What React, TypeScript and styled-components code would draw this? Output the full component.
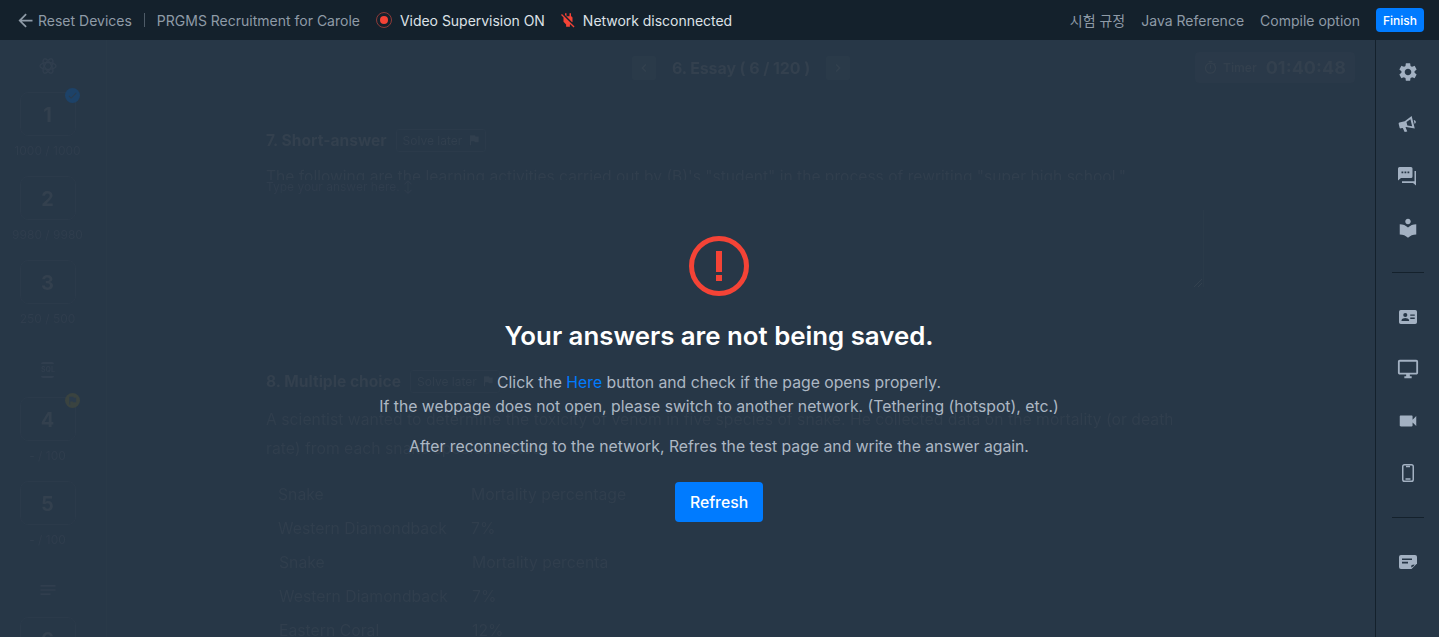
import React from "react";
import styled, { createGlobalStyle } from "styled-components";
import {
  MdArrowBack, MdSettings, MdLocalLibrary, MdOutlineDesktopWindows, MdVideocam, MdPowerOff,
  MdFlag, MdChevronLeft, MdChevronRight, MdOutlineTimer, MdCheck, MdNotes,
} from "react-icons/md";

const Global = createGlobalStyle`
  html, body { margin: 0; padding: 0; height: 100%; background: #273747; }
  * { box-sizing: border-box; }
  body { font-family: Inter, "Noto Sans CJK KR", "Liberation Sans", sans-serif; overflow: hidden; }
`;

const Page = styled.div`
  position: relative; width: 1439px; height: 637px; display: flex; flex-direction: column;
  overflow: hidden; background: #273747;
`;
const TopBar = styled.header`
  height: 40px; flex: none; display: flex; align-items: center; justify-content: space-between;
  background: #14212c; padding: 0 15px 0 15px; font-size: 14px; color: #8f9ba7;
`;
const BarGroup = styled.div`display: flex; align-items: center; gap: ${(p: { $gap: number }) => p.$gap}px;`;
const Back = styled.span`display: flex; align-items: center; gap: 2px; svg { font-size: 21px; }`;
const BarDivider = styled.span`width: 1px; height: 14px; background: #4e5b67; margin: 0 -1px;`;
const Status = styled.span<{ $gap: number; $ml: number }>`
  display: flex; align-items: center; gap: ${(p) => p.$gap}px; color: #dde2e7;
  margin-left: ${(p) => p.$ml}px; letter-spacing: -.03px;
`;
const Rec = styled.span`
  width: 16px; height: 16px; border-radius: 50%; border: 1px solid #8c3a38; display: flex;
  align-items: center; justify-content: center;
  &::after { content: ""; width: 8px; height: 8px; border-radius: 50%; background: #f44336; }
`;
const PlugIcon = styled(MdPowerOff)`color: #f44336; font-size: 18px; margin-left: -2px;`;
const FinishButton = styled.button`
  height: 24px; width: 48px; padding: 0; border: 0; border-radius: 4px; background: #007bff;
  color: #fff; font: 500 12px Inter, sans-serif;
`;

const Main = styled.div`flex: 1; display: flex; min-height: 0;`;
const Side = styled.aside`
  width: 107px; flex: none; border-right: 1px solid #293948; padding: 15px 11px 0 0;
  display: flex; flex-direction: column; align-items: center; overflow: hidden; filter: blur(.5px);
`;
const SectionIcon = styled.div<{ $after: number }>`
  height: 22px; line-height: 22px; color: #303e4e; display: flex; align-items: center; flex: none;
  justify-content: center; margin-bottom: ${(p) => p.$after}px;
  font-size: 20px;
`;
const SqlMark = styled.span`
  width: 13px; height: 16px; border-top: 2px solid #303e4e; border-bottom: 2px solid #303e4e; border-radius: 2px;
  font-size: 7px; font-weight: 700; line-height: 12px; text-align: center;
`;
const QBox = styled.div`
  position: relative; flex: none; width: 56px; height: 44px; border: 1px solid #2b3a4a; border-radius: 8px;
  display: flex; align-items: center; justify-content: center; padding-top: 2px;
  font-size: 20px; font-weight: 700; color: #33404e;
`;
const Badge = styled.span<{ $bg: string }>`
  position: absolute; top: -5px; right: -5px; width: 15px; height: 15px; border-radius: 50%;
  background: ${(p) => p.$bg}; color: #2b3b4b; display: flex; align-items: center;
  justify-content: center; font-size: 11px;
`;
const Score = styled.div`
  height: 14px; margin: 8px 0 18px; font-size: 12px; line-height: 14px; color: #2f3d4d;
  white-space: nowrap; flex: none;
`;
const Gap = styled.div<{ $h: number }>`height: ${(p) => p.$h}px; flex: none;`;

const Content = styled.main`flex: 1; min-width: 0; position: relative; overflow: hidden; filter: blur(.5px);`;
const ExamHead = styled.div`height: 55px; display: flex; align-items: center; justify-content: center;`;
const Nav = styled.div`display: flex; align-items: center; gap: 16px;`;
const NavButton = styled.span`
  width: 24px; height: 24px; background: #2a3a49; border-radius: 2px; display: flex; align-items: center;
  justify-content: center; color: #33424f; font-size: 16px;
`;
const ExamTitle = styled.span`font-size: 16px; font-weight: 700; color: #33404e; white-space: nowrap; letter-spacing: -.1px;`;
const Timer = styled.div`
  position: absolute; right: 20px; top: 12px; width: 160px; height: 31px; background: #2a3949; border-radius: 4px;
  display: flex; align-items: center; padding-left: 8px; color: #33404e; gap: 5px;
  svg { font-size: 15px; }
`;
const TimerLabel = styled.span`font-size: 12px; font-weight: 600;`;
const TimerValue = styled.span`font-size: 18px; font-weight: 700; margin-left: 4px;`;

const Body = styled.div`padding: 33px 0 0 159px; width: 1065px;`;
const QHead = styled.div`display: flex; align-items: center; height: 24px; gap: 9px;`;
const QTitle = styled.span`font-size: 15.6px; font-weight: 700; color: #33404e; white-space: nowrap;`;
const SolveLater = styled.span`
  display: flex; align-items: center; justify-content: space-between; width: 90px; height: 23px; padding: 0 4px 0 6px;
  border: 1px solid #2b3a4a; border-radius: 3px; font-size: 12px; color: #313f4e; white-space: nowrap;
  svg { font-size: 14px; }
`;
const ClipLine = styled.div`
  height: 13px; overflow: hidden; margin-top: 15px; font-size: 15.6px; line-height: 20px; color: #303e4d;
  white-space: nowrap;
`;
const AnswerLabel = styled.div`font-size: 12px; line-height: 14px; color: #2f3d4d; white-space: nowrap;`;
const AnswerArea = styled.div`
  position: relative; height: 77px; width: 938px; margin-top: 16px; border-right: 1px solid #2a3a49;
`;
const Resize = styled.svg`position: absolute; right: 1px; bottom: 0; width: 8px; height: 8px;`;
const Gapped = styled.div`margin-top: 82px;`;
const Para = styled.div`
  margin-top: 12px; font-size: 15.75px; line-height: 29px; color: #303e4d; white-space: nowrap; overflow: hidden;
`;
const Tables = styled.div`margin-top: 14px; display: flex; flex-direction: column;`;
const TableBlock = styled.div<{ $w: number; $ml: number }>`
  width: ${(p) => p.$w}px; margin-left: ${(p) => p.$ml}px; overflow: hidden; padding-left: 12px;
`;
const Row = styled.div`
  display: grid; grid-template-columns: 193px 200px; height: 34px; align-items: center; font-size: 15.75px;
  color: #303e4d; white-space: nowrap;
`;

const Rail = styled.nav`
  width: 64px; flex: none; border-left: 1px solid #14212c; display: flex; flex-direction: column;
  align-items: center; padding-top: 20px;
`;
const RailIcon = styled.div`
  height: 24px; width: 24px; flex: none; margin-bottom: 28px; display: flex; align-items: center; justify-content: center;
  color: #a3b1c2; font-size: 22px;
`;
const RailDivider = styled.div`width: 32px; height: 1px; flex: none; background: #14212c; margin: 4px 0 32px;`;

const Overlay = styled.div`
  position: absolute; left: 0; right: 1px; top: 40px; bottom: 0; display: flex; flex-direction: column; align-items: center;
  padding-top: 196px; pointer-events: none;
`;
const Heading = styled.h1`
  margin: 24px 0 0; font-size: 25.8px; line-height: 32px; font-weight: 600; color: #fff;
`;
const Msg = styled.p<{ $top: number }>`
  margin: ${(p) => p.$top}px 0 0; font-size: 15.75px; line-height: 24px; color: #adb8c4; text-align: center;
`;
const Link = styled.span`color: #007bff;`;
const Refresh = styled.button`
  margin-top: 23px; width: 88px; height: 40px; border: 0; border-radius: 4px; background: #007bff; color: #fff;
  font: 500 15.75px Inter, sans-serif;
`;

const AtomIcon = () => (
  <svg width="18" height="18" viewBox="0 0 18 18" fill="none" stroke="currentColor" strokeWidth="1.5">
    <ellipse cx="9" cy="9" rx="8" ry="3.4" transform="rotate(60 9 9)" />
    <ellipse cx="9" cy="9" rx="8" ry="3.4" transform="rotate(-60 9 9)" />
    <ellipse cx="9" cy="9" rx="8" ry="3.4" />
  </svg>
);
const MegaphoneIcon = () => (
  <svg width="20" height="18" viewBox="0 0 20 18" fill="currentColor">
    <g transform="rotate(-14 10 9)">
      <path fillRule="evenodd" d="M2 5.5h5.5L15.5 2v13l-8-3.5H6.8l.7 4.5H4.8L4 11.5H2a1 1 0 0 1-1-1v-4a1 1 0 0 1 1-1zM9 6.8v3.4l4.5 1.9V5z" />
      <path d="M16.5 6.5c1 .3 1.6 1 1.6 2s-.6 1.7-1.6 2z" />
    </g>
  </svg>
);
const ChatIcon = () => (
  <svg width="19" height="19" viewBox="0 0 19 19" fill="currentColor">
    <path fillRule="evenodd" d="M1.5 0h11.5a1.5 1.5 0 0 1 1.5 1.5v8a1.5 1.5 0 0 1-1.5 1.5H3l-3 2.500V1.500A1.5 1.5 0 0 1 1.5 0zM3.5 4.5v1.8h1.8V4.5zM6.5 4.5v1.8h1.8V4.5zM9.5 4.5v1.8h1.8V4.5z" />
    <path d="M16.5 4H18v14.5L15 16H4v-1.8h12.5z" />
  </svg>
);
const CardIcon = () => (
  <svg width="18" height="14" viewBox="0 0 20 16" fill="currentColor" preserveAspectRatio="none">
    <path fillRule="evenodd" d="M2 0h16a2 2 0 0 1 2 2v12a2 2 0 0 1-2 2H2a2 2 0 0 1-2-2V2a2 2 0 0 1 2-2zm5 3.5a2.3 2.3 0 1 0 0 4.6 2.3 2.3 0 0 0 0-4.6zM2.8 12.5h8.4v-.8c0-1.7-2.8-2.5-4.2-2.5s-4.2.8-4.2 2.5zM12.5 5v1.6h5V5zm0 3.6v1.6h5V8.6z" />
  </svg>
);
const PhoneIcon = () => (
  <svg width="12" height="18" viewBox="0 0 12 18" fill="none" stroke="currentColor" strokeWidth="1.5">
    <rect x=".75" y=".75" width="10.5" height="16.5" rx="1.8" />
    <path d="M4 2.5h4M3.5 15h5" />
  </svg>
);
const NoteIcon = () => (
  <svg width="18" height="14" viewBox="0 0 18 14">
    <path fill="currentColor" d="M2 0h14a2 2 0 0 1 2 2v6.5L12.5 14H2a2 2 0 0 1-2-2V2a2 2 0 0 1 2-2z" />
    <path fill="#273747" d="M3 3.5h10v1.6H3zM3 6.8h6v1.6H3zM12 12.5l.6-2.5 3-.5-1 1.7z" />
  </svg>
);

const Question = ({ n, score, badge }: { n: number; score?: string; badge?: React.ReactNode }) => (
  <>
    <QBox>{n}{badge}</QBox>
    {score && <Score>{score}</Score>}
  </>
);

const rows = [["Snake", "Mortality percentage"], ["Western Diamondback", "7%"]];
const rows2 = [["Snake", "Mortality percentage"], ["Western Diamondback", "7%"], ["Eastern Coral", "12%"]];

export default function App() {
  return (
    <Page>
      <Global />
      <TopBar>
        <BarGroup $gap={13}>
          <Back><MdArrowBack />Reset Devices</Back>
          <BarDivider />
          <span>PRGMS Recruitment for Carole</span>
          <Status $gap={8} $ml={3}><Rec />Video Supervision ON</Status>
          <Status $gap={6} $ml={3}><PlugIcon />Network disconnected</Status>
        </BarGroup>
        <BarGroup $gap={16}>
          <span>시험 규정</span>
          <span>Java Reference</span>
          <span>Compile option</span>
          <FinishButton>Finish</FinishButton>
        </BarGroup>
      </TopBar>
      <Main>
        <Side>
          <SectionIcon $after={15}><AtomIcon /></SectionIcon>
          <Question n={1} score="1000 / 1000" badge={<Badge $bg="#1d4268"><MdCheck /></Badge>} />
          <Question n={2} score="9980 / 9980" />
          <Question n={3} score="250 / 500" />
          <Gap $h={15} />
          <SectionIcon $after={16}><SqlMark>SQL</SqlMark></SectionIcon>
          <Question n={4} score="- / 100" badge={<Badge $bg="#3a4340"><MdFlag /></Badge>} />
          <Question n={5} score="- / 100" />
          <Gap $h={14} />
          <SectionIcon $after={16}><MdNotes /></SectionIcon>
          <Question n={6} />
        </Side>
        <Content>
          <ExamHead>
            <Nav>
              <NavButton><MdChevronLeft /></NavButton>
              <ExamTitle>6. Essay ( 6 / 120 )</ExamTitle>
              <NavButton><MdChevronRight /></NavButton>
            </Nav>
            <Timer>
              <MdOutlineTimer />
              <TimerLabel>Timer</TimerLabel>
              <TimerValue>01:40:48</TimerValue>
            </Timer>
          </ExamHead>
          <Body>
            <QHead>
              <QTitle>7. Short-answer</QTitle>
              <SolveLater>Solve later <MdFlag /></SolveLater>
            </QHead>
            <ClipLine>The following are the learning activities carried out by (B)'s "student" in the process of rewriting "super high school."</ClipLine>
            <AnswerLabel>Type your answer here. ↕</AnswerLabel>
            <AnswerArea>
              <Resize viewBox="0 0 8 8"><path d="M8 0 0 8M8 4 4 8" stroke="#33414f" /></Resize>
            </AnswerArea>
            <Gapped>
              <QHead>
                <QTitle>8. Multiple choice</QTitle>
                <SolveLater>Solve later <MdFlag /></SolveLater>
              </QHead>
            </Gapped>
            <Para>
              A scientist wanted to determine the toxicity of venom in five species of snake. He collected data on the mortality (or death<br />
              rate) from each snake species tested.
            </Para>
            <Tables>
              <TableBlock $w={400} $ml={0}>
                {rows.map((r) => <Row key={r[0]}><span>{r[0]}</span><span>{r[1]}</span></Row>)}
              </TableBlock>
              <TableBlock $w={341} $ml={1}>
                {rows2.map((r) => <Row key={r[0]}><span>{r[0]}</span><span>{r[1]}</span></Row>)}
              </TableBlock>
            </Tables>
          </Body>
        </Content>
        <Rail>
          <RailIcon><MdSettings /></RailIcon>
          <RailIcon><MegaphoneIcon /></RailIcon>
          <RailIcon><ChatIcon /></RailIcon>
          <RailIcon><MdLocalLibrary /></RailIcon>
          <RailDivider />
          <RailIcon><CardIcon /></RailIcon>
          <RailIcon><MdOutlineDesktopWindows /></RailIcon>
          <RailIcon><MdVideocam /></RailIcon>
          <RailIcon><PhoneIcon /></RailIcon>
          <RailDivider />
          <RailIcon><NoteIcon /></RailIcon>
        </Rail>
      </Main>
      <Overlay>
        <svg width="60" height="60" viewBox="0 0 60 60">
          <circle cx="30" cy="30" r="27.5" fill="none" stroke="#f44336" strokeWidth="5" />
          <rect x="27" y="15" width="6" height="21" fill="#f44336" />
          <rect x="27" y="39" width="6" height="6" fill="#f44336" />
        </svg>
        <Heading>Your answers are not being saved.</Heading>
        <Msg $top={19}>Click the <Link>Here</Link> button and check if the page opens properly.<br />If the webpage does not open, please switch to another network. (Tethering (hotspot), etc.)</Msg>
        <Msg $top={16}>After reconnecting to the network, Refres the test page and write the answer again.</Msg>
        <Refresh>Refresh</Refresh>
      </Overlay>
    </Page>
  );
}
